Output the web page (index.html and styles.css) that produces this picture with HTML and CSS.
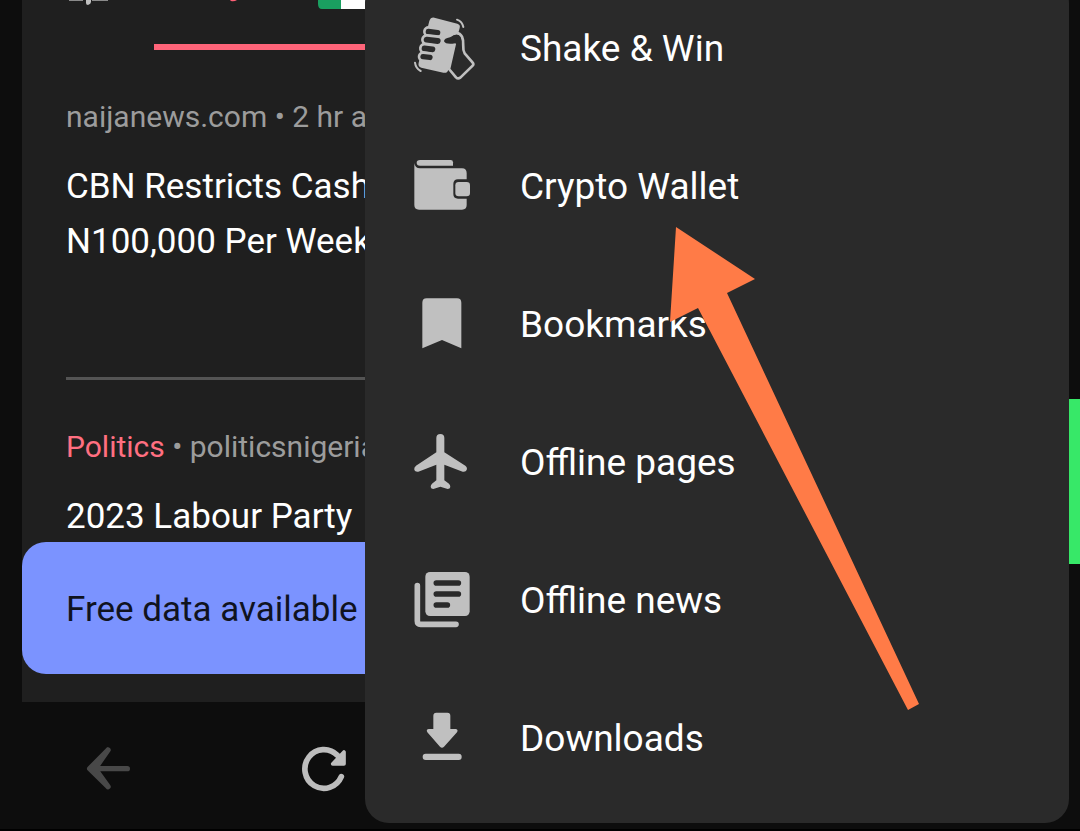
FILE: index.html
```html
<!DOCTYPE html>
<html lang="en">
<head>
<meta charset="utf-8">
<meta name="viewport" content="width=device-width, initial-scale=1">
<title>News</title>
<link rel="stylesheet" href="styles.css">
</head>
<body>
<div class="screen">
  <div class="content">
    <main class="feed">
      <header class="tabs">
        <svg class="tabs-marks" viewBox="0 0 300 10" aria-hidden="true">
          <path d="M3 0H17V1H3zM26 0H42V1H26z" fill="#8a8a8a"/>
          <path d="M20 0H25V2Q25 4 22 5Q20 5 20 3z" fill="#c0c0c0"/>
          <path d="M164 0H171Q168 2 165 1z" fill="#ff6076"/>
          <path d="M252 0H275V9H256Q252 9 252 4z" fill="#1a9f60"/>
          <path d="M275 0H300V9H275z" fill="#fff"/>
        </svg>
        <div class="tab-line"></div>
      </header>
      <article class="story">
        <p class="meta">naijanews.com • 2 hr ago</p>
        <h2 class="title">CBN Restricts Cash<br>N100,000 Per Week</h2>
      </article>
      <article class="story story-next">
        <p class="meta"><span class="topic">Politics</span> • politicsnigeria</p>
        <h2 class="title">2023 Labour Party</h2>
      </article>
      <div class="banner">Free data available</div>
    </main>
    <aside class="edge"><div class="edge-tab"></div></aside>
  </div>

  <nav class="toolbar" aria-label="Browser">
    <button class="tool tool-off" aria-label="Back">
      <svg viewBox="252 195 144 144"><path d="M324 210L269 266L324 320M273 266H382M324 210L285 266L324 320" fill="none" stroke="#484848" stroke-width="16" stroke-linecap="round" stroke-linejoin="round" /></svg>
    </button>
    <button class="tool" aria-label="Reload">
      <svg viewBox="900 195 144 144"><path d="M1024 290A57 58 0 1 1 1012 226" fill="none" stroke="#bdbdbd" stroke-width="17" stroke-linecap="round"/><path d="M1032 216V252H998z" fill="#bdbdbd" stroke="#bdbdbd" stroke-width="11" stroke-linejoin="round"/></svg>
    </button>
  </nav>

  <div class="menu">
    <button class="item">
      <svg class="icon" viewBox="30 48 192 192" aria-hidden="true">
        <path d="M103 53L172 71Q182 74 179 84L145 209Q141 221 130 218L64 203Q53 200 56 188L88 63Q92 51 103 53z"/>
        <path class="cut outlined" d="M150 108C163 97 178 95 186 110C195 130 184 144 194 160L218 188Q222 193 218 197L181 233Q174 238 168 232L147 207L165 128z"/>
        <path class="cut" d="M132 124Q132 115 150 112Q166 102 177 106L180 145L166 130Q137 135 132 124z"/>
        <g class="cut outlined">
          <rect x="73" y="84" width="52" height="25" rx="12" transform="rotate(7 99 97)"/>
          <rect x="67" y="108" width="59" height="26" rx="13" transform="rotate(7 97 121)"/>
          <rect x="61" y="134" width="49" height="25" rx="12" transform="rotate(7 85 146)"/>
          <rect x="57" y="159" width="45" height="24" rx="12" transform="rotate(7 79 171)"/>
        </g>
        <path class="line" stroke-width="6" d="M171 59Q187 65 190 81M45 188Q47 205 62 213"/>
      </svg>
      <span>Shake &amp; Win</span>
    </button>
    <button class="item">
      <svg class="icon" viewBox="30 27 192 192" aria-hidden="true">
        <path d="M60 45H152Q159 45 159 52V62H60Q50 62 50 53Q50 45 60 45z"/>
        <path d="M43 54Q45 70 60 70H186Q200 70 200 84V103H174Q160 103 160 117V147Q160 161 174 161H200V180Q200 194 186 194H57Q43 194 43 180z"/>
        <rect x="166" y="111" width="44" height="43" rx="10"/>
      </svg>
      <span>Crypto Wallet</span>
    </button>
    <button class="item">
      <svg class="icon" viewBox="30 21 192 192" aria-hidden="true"><path d="M80 40H171Q184 40 184 53V190L126 165L67 190V53Q67 40 80 40z"/></svg>
      <span>Bookmarks</span>
    </button>
    <button class="item">
      <svg class="icon" viewBox="30 30 192 192" aria-hidden="true"><path d="M109 54Q109 42 121 42Q133 42 133 54V97L196 137Q203 142 200 150Q197 157 188 155L133 134V181L147 191Q151 195 151 201Q150 207 143 207L121 200L100 207Q93 207 92 201Q92 195 96 191L109 181V134L55 155Q46 157 43 150Q41 142 48 137L109 97z"/></svg>
      <span>Offline pages</span>
    </button>
    <button class="item">
      <svg class="icon" viewBox="30 24 192 192" aria-hidden="true">
        <rect x="76" y="36" width="133" height="132" rx="14"/>
        <path d="M109 69H175M109 102H175M109 135H142" fill="none" stroke="#2a2a2a" stroke-width="17" stroke-linecap="round"/>
        <path class="line" stroke-width="17" d="M52 77V183Q52 193 62 193H168"/>
      </svg>
      <span>Offline news</span>
    </button>
    <button class="item">
      <svg class="icon" viewBox="30 18 192 192" aria-hidden="true">
        <path d="M109 38H142Q151 38 151 47V87H166Q176 88 171 97L132 140Q126 146 120 140L82 97Q77 88 87 87H100V47Q100 38 109 38z"/>
        <rect x="68" y="161" width="117" height="19" rx="9"/>
      </svg>
      <span>Downloads</span>
    </button>
    <svg class="pointer" viewBox="0 0 250 483" aria-hidden="true"><path d="M6 0L85 52L57 66L249 477L238 483L28 81L0 95z" fill="#ff7b47"/></svg>
  </div>
</div>
</body>
</html>
```
FILE: styles.css
```css
* { box-sizing: border-box; }

body {
  margin: 0;
  background: #0d0d0d;
  color: #fff;
  font-family: Roboto, "Liberation Sans", sans-serif;
}

.screen {
  position: relative;
  display: flex;
  flex-direction: column;
  min-height: 100vh;
  overflow: hidden;
}

.content {
  display: flex;
  padding-left: 22px;
}

.feed {
  flex: 1;
  padding-bottom: 28px;
  background: #1f1f1f;
}

.tabs {
  display: flex;
  flex-direction: column;
  justify-content: space-between;
  height: 50px;
  padding-left: 44px;
}

.tabs-marks {
  width: 300px;
  height: 10px;
}

.tab-line {
  width: 280px;
  height: 6px;
  margin-left: 88px;
  background: #ff6479;
}

.story {
  margin-left: 44px;
  padding: 47px 0 108px;
  border-bottom: 3px solid #545454;
}

.story-next {
  padding-bottom: 0;
  border-bottom: 0;
}

.meta {
  margin: 0 0 22px;
  color: #9c9c9c;
  font-size: 30px;
  line-height: 40px;
}

.topic { color: #ff6f81; }

.title {
  margin: 0;
  font-size: 35px;
  font-weight: 400;
  line-height: 55px;
}

.banner {
  margin-top: -2px;
  padding: 40px 44px 37px;
  border-radius: 24px;
  background: #7b93ff;
  color: #10131f;
  font-size: 35px;
  line-height: 55px;
}

.edge {
  width: 22px;
  padding-top: 399px;
}

.edge-tab {
  height: 165px;
  background: #37e868;
}

.toolbar {
  display: flex;
  flex: 1;
  padding-top: 7px;
  border-bottom: 2px solid #000;
}

.tool {
  display: flex;
  align-items: center;
  justify-content: center;
  width: 20%;
  padding: 0;
  border: 0;
  background: none;
}

.tool svg {
  width: 48px;
  height: 48px;
}

.menu {
  position: absolute;
  right: 11px;
  bottom: 8px;
  left: 365px;
  padding-bottom: 16px;
  border-radius: 24px;
  background: #2a2a2a;
}

.item {
  display: flex;
  align-items: center;
  gap: 46px;
  width: 100%;
  height: 138px;
  padding: 0 45px;
  border: 0;
  background: none;
  color: #fff;
  font: inherit;
  font-size: 37px;
  text-align: left;
}

.icon {
  width: 64px;
  height: 64px;
  overflow: visible;
  fill: #c0c0c0;
}

.icon .cut { fill: #2a2a2a; }

.icon .outlined {
  stroke: #c0c0c0;
  stroke-width: 8px;
  stroke-linejoin: round;
}

.icon .line {
  fill: none;
  stroke: #c0c0c0;
  stroke-linecap: round;
}

.pointer {
  position: absolute;
  top: 248px;
  left: 305px;
  width: 250px;
  height: 483px;
}
```
